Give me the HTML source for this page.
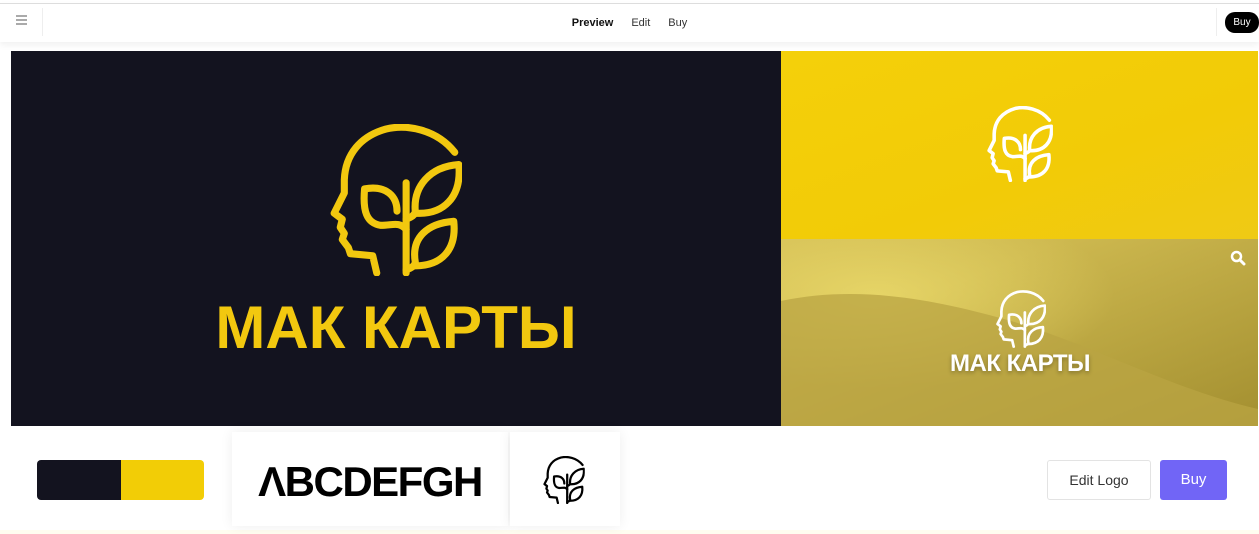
<!DOCTYPE html>
<html><head><meta charset="utf-8">
<style>
*{margin:0;padding:0;box-sizing:border-box}
body{width:1259px;height:534px;background:#fff;font-family:"Liberation Sans",sans-serif;position:relative;overflow:hidden}
.abs{position:absolute}
.nav{left:0;top:3px;width:1259px;height:39px;border-top:1px solid #ddd;background:#fff;box-shadow:0 3px 6px rgba(0,0,0,.06)}
.navlinks{left:0;width:1259px;top:16px;text-align:center;font-size:11px;color:#333}
.navlinks span{margin:0 9px}
.logo-txt{font-weight:bold;white-space:nowrap}
.card{background:#fff;box-shadow:0 0 12px rgba(0,0,0,.07)}
</style></head><body>
<svg width="0" height="0" style="position:absolute">
<defs>
<symbol id="head" viewBox="0 0 130 150">
<g fill="none" stroke="currentColor" stroke-width="7" stroke-linecap="round" stroke-linejoin="round">
<path d="M123,28 C105,5 75,0 55,5 C30,12 15,30 14,55 L14,68 L4,88 L12,94 L10,102 L14,108 L12,114 L18,122 L20,128 L42,130 L46,147"/>
<path d="M75,58 L75,147"/>
<path d="M75,104 C68,96 62,100 50,100 C36,98 32,86 34,64 C56,60 66,72 66,86"/>
<path d="M75,94 C80,92 84,90 84,86 C82,62 98,42 127,40 C130,72 112,90 84,88"/>
<path d="M75,144 C80,142 84,140 84,136 C80,112 96,98 122,96 C125,124 110,140 84,140"/>
</g>
</symbol>
<linearGradient id="dg" x1="0" y1="0" x2="1" y2="1">
<stop offset="0" stop-color="#d4bf55"/><stop offset=".3" stop-color="#cdb84f"/><stop offset="1" stop-color="#a38f30"/>
</linearGradient>
<radialGradient id="glow" cx=".2" cy=".3" r=".5"><stop offset="0" stop-color="#f0e070" stop-opacity=".7"/><stop offset="1" stop-color="#f0e070" stop-opacity="0"/></radialGradient>
</defs>
</svg>

<div class="abs nav"></div>
<div class="abs" style="left:16px;top:15px;width:11px;height:2px;background:#aaa;box-shadow:0 4px 0 #aaa,0 8px 0 #aaa"></div>
<div class="abs" style="left:42px;top:8px;width:1px;height:28px;background:#eee"></div>
<div class="abs" style="left:1216px;top:8px;width:1px;height:28px;background:#eee"></div>
<div class="abs navlinks" style="top:17px"><span style="font-weight:bold;color:#111">Preview</span><span>Edit</span><span>Buy</span></div>
<div class="abs" style="left:1225px;top:12px;width:34px;height:21px;border-radius:10px;background:#000;color:#fff;font-size:10px;line-height:21px;text-align:center">Buy</div>

<div class="abs" style="left:11px;top:51px;width:770px;height:375px;background:#13131f"></div>
<svg class="abs" style="left:330px;top:124px;color:#f2c80f" width="132" height="152"><use href="#head"/></svg>
<div class="abs logo-txt" style="left:206px;top:293px;width:380px;text-align:center;color:#f2c80f;font-size:60px;letter-spacing:0px">МАК КАРТЫ</div>

<div class="abs" style="left:781px;top:51px;width:477px;height:188px;background:linear-gradient(160deg,#f4d00a,#f2cb07 60%,#efca15)"></div>
<svg class="abs" style="left:987px;top:106px;color:#fff" width="66" height="76" viewBox="0 0 130 150"><use href="#head" width="130" height="150"/></svg>

<svg class="abs" style="left:781px;top:239px" width="477" height="187">
<rect width="477" height="187" fill="url(#dg)"/>
<rect width="477" height="187" fill="url(#glow)"/>
<path d="M0,62 C80,45 160,62 230,82 C310,105 390,150 477,170 L477,187 L0,187 Z" fill="#b9a443" opacity=".75"/>
</svg>
<svg class="abs" style="left:996px;top:290px;color:#fff" width="50" height="58" viewBox="0 0 130 150"><use href="#head" width="130" height="150"/></svg>
<div class="abs logo-txt" style="left:940px;top:350px;width:160px;text-align:center;color:#fff;font-size:24px;letter-spacing:-.5px;text-shadow:0 2px 4px rgba(0,0,0,.3)">МАК КАРТЫ</div>
<svg class="abs" style="left:1230px;top:250px" width="16" height="16" viewBox="0 0 16 16"><circle cx="6.5" cy="6.5" r="4.5" fill="none" stroke="#fff" stroke-width="2.5"/><path d="M10,10 L14,14" stroke="#fff" stroke-width="3" stroke-linecap="round"/></svg>

<div class="abs" style="left:0;top:530px;width:1259px;height:4px;background:#fffdf0"></div>
<div class="abs" style="left:37px;top:460px;width:167px;height:40px;border-radius:4px;overflow:hidden;display:flex"><div style="width:84px;background:#13131f"></div><div style="flex:1;background:#f2cd06"></div></div>
<div class="abs card" style="left:232px;top:432px;width:276px;height:94px"></div>
<div class="abs logo-txt" style="left:232px;top:458px;width:276px;text-align:center;font-size:42px;color:#000;letter-spacing:-1.5px">ΛBCDEFGH</div>
<div class="abs card" style="left:510px;top:432px;width:110px;height:94px"></div>
<svg class="abs" style="left:543px;top:456px;color:#000" width="42" height="48" viewBox="0 0 130 150"><use href="#head" width="130" height="150"/></svg>
<div class="abs" style="left:1047px;top:460px;width:104px;height:40px;border:1px solid #e3e3e3;border-radius:3px;font-size:14px;color:#333;text-align:center;line-height:38px">Edit Logo</div>
<div class="abs" style="left:1160px;top:460px;width:67px;height:40px;background:#7165f6;border-radius:3px;font-size:15px;color:#fff;text-align:center;line-height:40px">Buy</div>
</body></html>
